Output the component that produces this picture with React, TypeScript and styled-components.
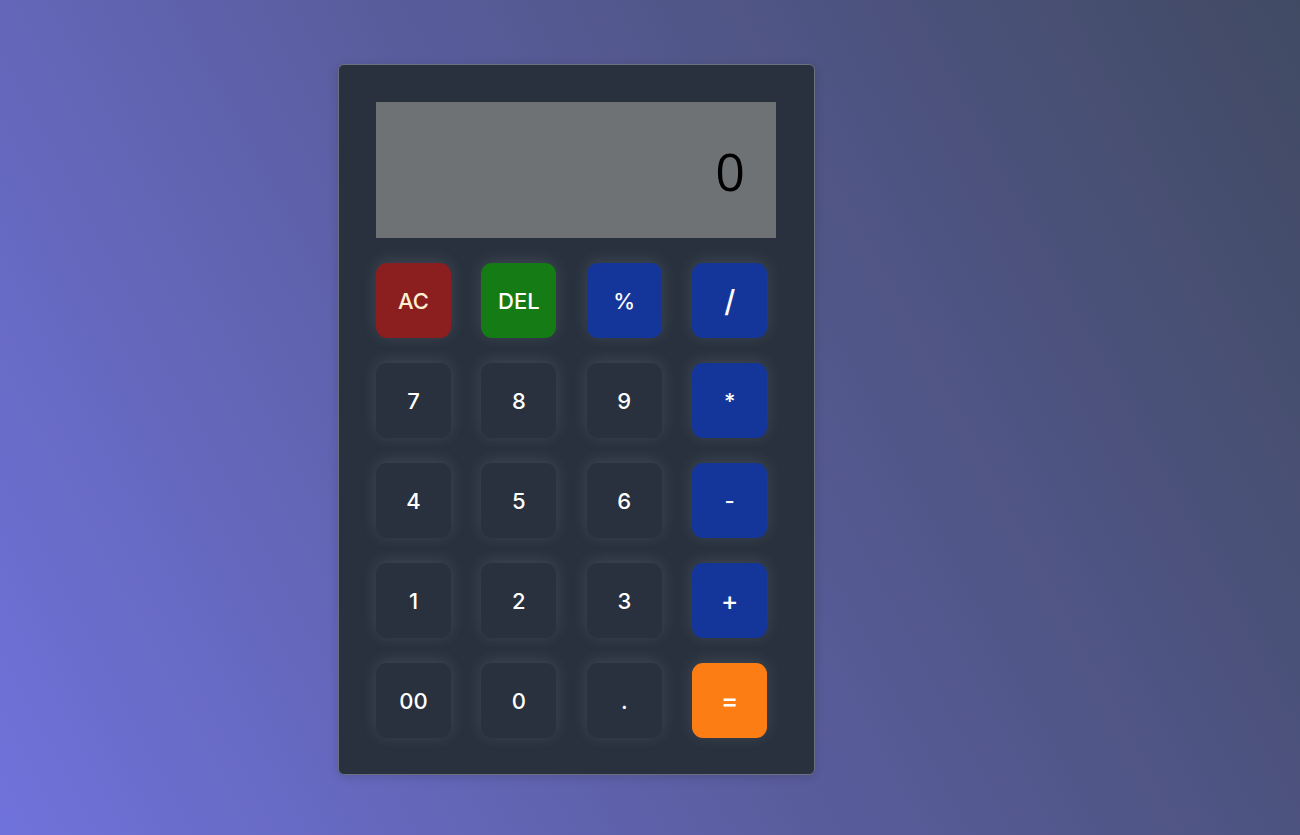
import React from "react";
import styled, { createGlobalStyle } from "styled-components";

const GlobalStyle = createGlobalStyle`
  html, body {
    margin: 0;
    padding: 0;
    height: 100%;
  }
  body {
    background: linear-gradient(62deg, #7072db 0%, #5a5d9e 45%, #414a63 100%);
    font-family: "Inter", "Open Sans", sans-serif;
  }
`;

type Variant = "num" | "clear" | "del" | "op" | "equal";

const colors: Record<Variant, string> = {
  num: "#28313d",
  clear: "#8b1e1e",
  del: "#157c15",
  op: "#14369a",
  equal: "#fc7d14",
};

const Page = styled.div`
  width: 1300px;
  height: 835px;
  box-sizing: border-box;
  padding: 64px 0 0 338px;
`;

const Calculator = styled.div`
  width: 477px;
  height: 711px;
  box-sizing: border-box;
  background: #28313d;
  border: 1px solid #6b7080;
  border-radius: 6px;
  padding: 37px 38px 0 37px;
  box-shadow: 0 2px 10px rgba(0, 0, 0, 0.15);
`;

const Display = styled.div`
  height: 136px;
  background: #6f7275;
  display: flex;
  align-items: center;
  justify-content: flex-end;
  padding-right: 31px;
  font-family: "Open Sans", sans-serif;
  font-size: 52px;
  color: #000;
`;

const Keys = styled.div`
  margin-top: 25px;
  display: grid;
  grid-template-columns: repeat(4, 75px);
  column-gap: 30.4px;
  row-gap: 25px;
`;

const Key = styled.button<{ $variant: Variant; $size?: number }>`
  width: 75px;
  height: 75px;
  border: none;
  border-radius: 11px;
  background: ${({ $variant }) => colors[$variant]};
  color: ${({ $variant }) => ($variant === "clear" ? "#fdf0d0" : "#ffffff")};
  font-family: "Inter", "Open Sans", sans-serif;
  font-weight: 500;
  font-size: ${({ $size }) => $size ?? 22}px;
  display: flex;
  align-items: center;
  justify-content: center;
  box-shadow: 0 -2px 16px rgba(190, 198, 212, 0.16);
  padding: 0;
`;

const keys: { label: string; variant: Variant; size?: number }[] = [
  { label: "AC", variant: "clear" },
  { label: "DEL", variant: "del" },
  { label: "%", variant: "op" },
  { label: "/", variant: "op", size: 30 },
  { label: "7", variant: "num" },
  { label: "8", variant: "num" },
  { label: "9", variant: "num" },
  { label: "*", variant: "op" },
  { label: "4", variant: "num" },
  { label: "5", variant: "num" },
  { label: "6", variant: "num" },
  { label: "-", variant: "op" },
  { label: "1", variant: "num" },
  { label: "2", variant: "num" },
  { label: "3", variant: "num" },
  { label: "+", variant: "op", size: 26 },
  { label: "00", variant: "num" },
  { label: "0", variant: "num" },
  { label: ".", variant: "num" },
  { label: "=", variant: "equal", size: 26 },
];

export default function App() {
  return (
    <>
      <GlobalStyle />
      <Page>
        <Calculator>
          <Display>0</Display>
          <Keys>
            {keys.map((k) => (
              <Key key={k.label} $variant={k.variant} $size={k.size}>
                {k.label}
              </Key>
            ))}
          </Keys>
        </Calculator>
      </Page>
    </>
  );
}
